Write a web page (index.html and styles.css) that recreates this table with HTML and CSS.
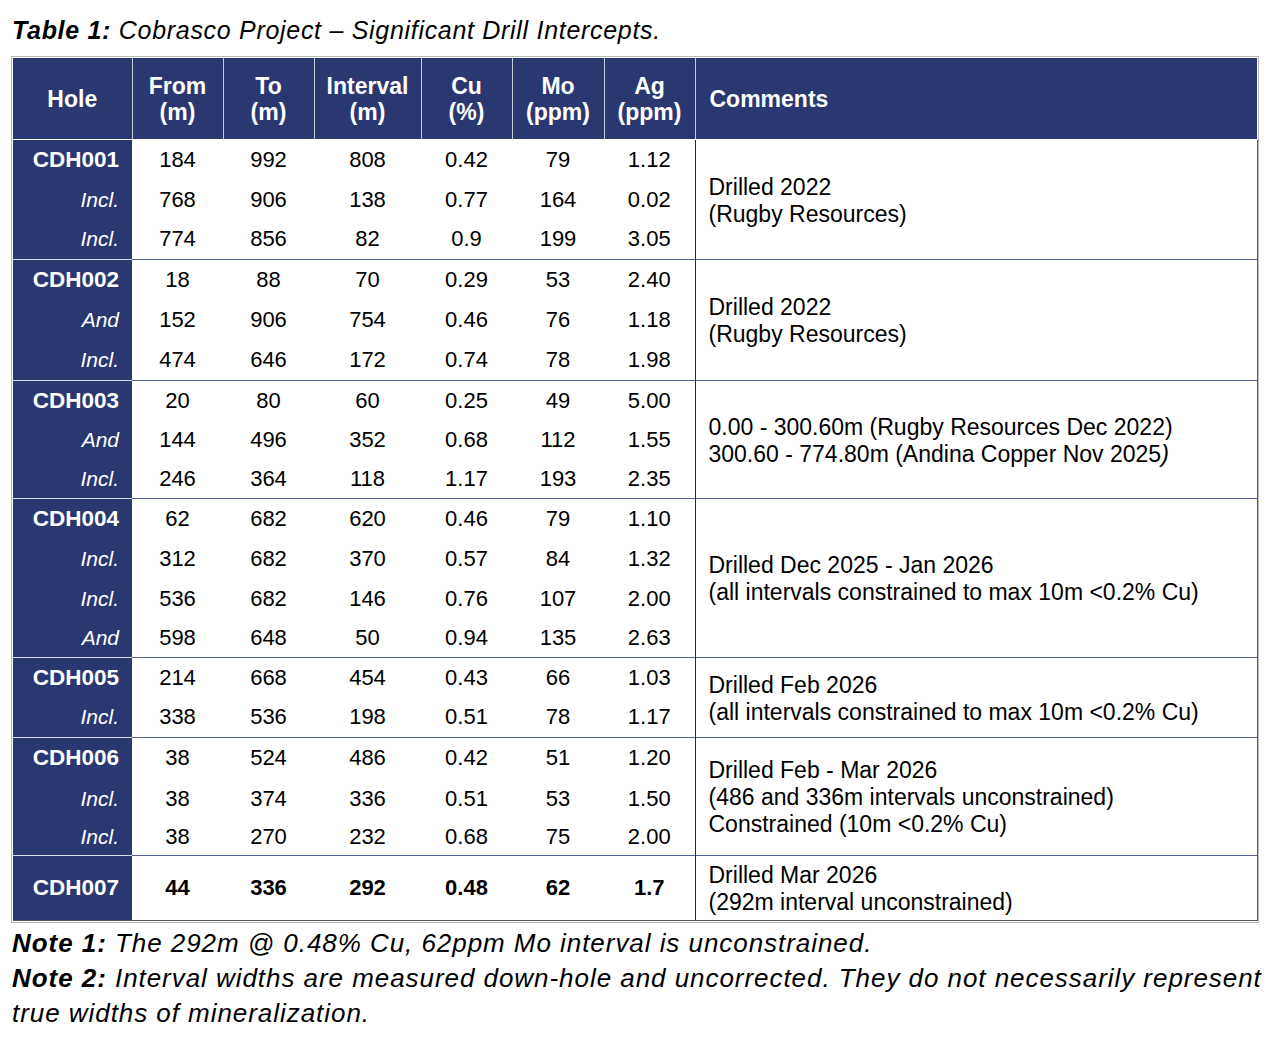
FILE: index.html
```html
<!DOCTYPE html>
<html lang="en">
<head>
<meta charset="utf-8">
<title>Cobrasco Project – Significant Drill Intercepts</title>
<link rel="stylesheet" href="styles.css">
</head>
<body>
<div class="page">
  <p class="title"><b>Table 1:</b> Cobrasco Project – Significant Drill Intercepts.</p>
  <div class="frame">
    <table class="drill">
      <colgroup>
        <col class="c-hole"><col class="c-num"><col class="c-num"><col class="c-int"><col class="c-num"><col class="c-mo"><col class="c-num"><col class="c-com">
      </colgroup>
      <thead>
        <tr>
          <th class="hole-h">Hole</th>
          <th>From<br>(m)</th>
          <th>To<br>(m)</th>
          <th>Interval<br>(m)</th>
          <th>Cu<br>(%)</th>
          <th>Mo<br>(ppm)</th>
          <th>Ag<br>(ppm)</th>
          <th class="com-h">Comments</th>
        </tr>
      </thead>
      <tbody>
        <tr class="grp r40">
          <td class="hole">CDH001</td><td>184</td><td>992</td><td>808</td><td>0.42</td><td>79</td><td>1.12</td>
          <td class="com" rowspan="3">Drilled 2022<br>(Rugby Resources)</td>
        </tr>
        <tr class="r40"><td class="hole sub">Incl.</td><td>768</td><td>906</td><td>138</td><td>0.77</td><td>164</td><td>0.02</td></tr>
        <tr class="r40"><td class="hole sub">Incl.</td><td>774</td><td>856</td><td>82</td><td>0.9</td><td>199</td><td>3.05</td></tr>

        <tr class="grp r40">
          <td class="hole">CDH002</td><td>18</td><td>88</td><td>70</td><td>0.29</td><td>53</td><td>2.40</td>
          <td class="com" rowspan="3">Drilled 2022<br>(Rugby Resources)</td>
        </tr>
        <tr class="r40"><td class="hole sub">And</td><td>152</td><td>906</td><td>754</td><td>0.46</td><td>76</td><td>1.18</td></tr>
        <tr class="r41"><td class="hole sub">Incl.</td><td>474</td><td>646</td><td>172</td><td>0.74</td><td>78</td><td>1.98</td></tr>

        <tr class="grp r40">
          <td class="hole">CDH003</td><td>20</td><td>80</td><td>60</td><td>0.25</td><td>49</td><td>5.00</td>
          <td class="com" rowspan="3">0.00 - 300.60m (Rugby Resources Dec 2022)<br>300.60 - 774.80m (Andina Copper Nov 2025<i>)</i></td>
        </tr>
        <tr class="r39"><td class="hole sub">And</td><td>144</td><td>496</td><td>352</td><td>0.68</td><td>112</td><td>1.55</td></tr>
        <tr class="r39"><td class="hole sub">Incl.</td><td>246</td><td>364</td><td>118</td><td>1.17</td><td>193</td><td>2.35</td></tr>

        <tr class="grp r40">
          <td class="hole">CDH004</td><td>62</td><td>682</td><td>620</td><td>0.46</td><td>79</td><td>1.10</td>
          <td class="com" rowspan="4">Drilled Dec 2025 - Jan 2026<br>(all intervals constrained to max 10m &lt;0.2% Cu)</td>
        </tr>
        <tr class="r40"><td class="hole sub">Incl.</td><td>312</td><td>682</td><td>370</td><td>0.57</td><td>84</td><td>1.32</td></tr>
        <tr class="r40"><td class="hole sub">Incl.</td><td>536</td><td>682</td><td>146</td><td>0.76</td><td>107</td><td>2.00</td></tr>
        <tr class="r39"><td class="hole sub">And</td><td>598</td><td>648</td><td>50</td><td>0.94</td><td>135</td><td>2.63</td></tr>

        <tr class="grp r40">
          <td class="hole">CDH005</td><td>214</td><td>668</td><td>454</td><td>0.43</td><td>66</td><td>1.03</td>
          <td class="com" rowspan="2">Drilled Feb 2026<br>(all intervals constrained to max 10m &lt;0.2% Cu)</td>
        </tr>
        <tr class="r40"><td class="hole sub">Incl.</td><td>338</td><td>536</td><td>198</td><td>0.51</td><td>78</td><td>1.17</td></tr>

        <tr class="grp r40">
          <td class="hole">CDH006</td><td>38</td><td>524</td><td>486</td><td>0.42</td><td>51</td><td>1.20</td>
          <td class="com" rowspan="3">Drilled Feb - Mar 2026<br>(486 and 336m intervals unconstrained)<br>Constrained (10m &lt;0.2% Cu)</td>
        </tr>
        <tr class="r42"><td class="hole sub">Incl.</td><td>38</td><td>374</td><td>336</td><td>0.51</td><td>53</td><td>1.50</td></tr>
        <tr class="r36"><td class="hole sub">Incl.</td><td>38</td><td>270</td><td>232</td><td>0.68</td><td>75</td><td>2.00</td></tr>

        <tr class="grp r65 last">
          <td class="hole">CDH007</td><td class="b">44</td><td class="b">336</td><td class="b">292</td><td class="b">0.48</td><td class="b">62</td><td class="b">1.7</td>
          <td class="com">Drilled Mar 2026<br>(292m interval unconstrained)</td>
        </tr>
      </tbody>
    </table>
  </div>
  <p class="note"><b>Note 1:</b> The 292m @ 0.48% Cu, 62ppm Mo interval is unconstrained.</p>
  <p class="note"><b>Note 2:</b> Interval widths are measured down-hole and uncorrected. They do not necessarily represent true widths of mineralization.</p>
</div>
</body>
</html>
```

FILE: styles.css
```css
html, body {
  margin: 0;
  padding: 0;
  background: #ffffff;
}

body {
  font-family: "Liberation Sans", Arial, sans-serif;
  color: #000000;
}

.page {
  padding: 0 0 0 11px;
}

.title {
  margin: 0;
  padding: 15px 0 0 1px;
  height: 56px;
  box-sizing: border-box;
  font-size: 25px;
  line-height: 30px;
  font-style: italic;
  letter-spacing: 0.7px;
}

.title b {
  font-weight: bold;
}

.frame {
  width: 1248px;
  box-sizing: border-box;
  border: 1px solid #b9b9b9;
  padding: 1px;
}

.drill {
  width: 1244px;
  table-layout: fixed;
  border-collapse: collapse;
  font-size: 22px;
}

.c-hole { width: 119px; }
.c-num { width: 91px; }
.c-int { width: 107px; }
.c-mo { width: 92px; }
.c-com { width: 562px; }

.drill thead th {
  background: #2b3770;
  color: #ffffff;
  font-weight: bold;
  font-size: 23px;
  line-height: 26px;
  height: 81px;
  padding: 0;
  text-align: center;
  vertical-align: middle;
  border-left: 1px solid #c9cde0;
  border-bottom: 1px solid #ffffff;
}

.drill thead th.hole-h {
  border-left: none;
}

.drill thead th.com-h {
  text-align: left;
  padding-left: 14px;
}

.drill td {
  padding: 0;
  text-align: center;
  vertical-align: middle;
  line-height: 26px;
}

.drill td.hole {
  background: #2b3770;
  color: #ffffff;
  font-weight: bold;
  font-size: 22.5px;
  text-align: right;
  padding-right: 13px;
}

.drill td.hole.sub {
  font-weight: normal;
  font-style: italic;
  font-size: 21px;
}

.drill td.b {
  font-weight: bold;
}

.drill td.com {
  text-align: left;
  padding: 2px 0 0 13px;
  font-size: 23px;
  line-height: 27px;
  border-left: 1px solid #1f2650;
  border-right: 1px solid #5a5a5a;
}

.drill tr.grp td {
  border-top: 1px solid #56609a;
}

.drill tr.grp td.hole {
  border-top: 1px solid #d8dcec;
}

.drill thead + tbody tr.grp:first-child td {
  border-top: none;
}

.drill tr.last td {
  border-bottom: 1px solid #5a5a5a;
}

.r36 { height: 36px; }
.r39 { height: 39px; }
.r40 { height: 40px; }
.r41 { height: 41px; }
.r42 { height: 42px; }
.r65 { height: 65px; }

.note {
  margin: 0;
  padding-left: 1px;
  font-size: 26px;
  line-height: 35px;
  font-style: italic;
  letter-spacing: 0.95px;
  width: 1252px;
}

.note b {
  font-weight: bold;
}

.frame + .note {
  margin-top: 3px;
}
```
